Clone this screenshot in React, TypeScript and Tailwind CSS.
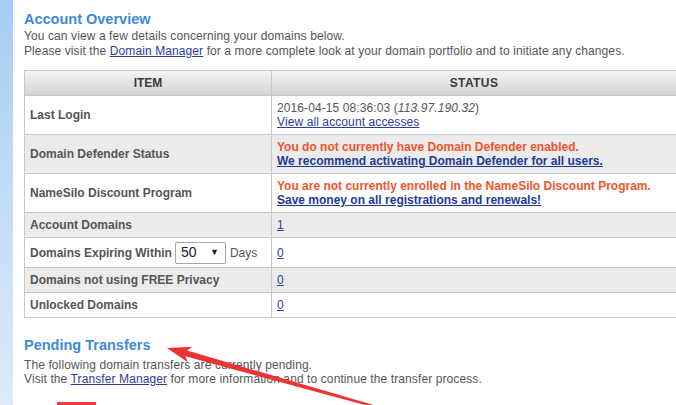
const rows = [
  { label: "Last Login", h: "h-[39px]", bg: "bg-white", kind: "login" },
  { label: "Domain Defender Status", h: "h-[39px]", bg: "bg-[#ebebeb]", kind: "defender" },
  { label: "NameSilo Discount Program", h: "h-[39px]", bg: "bg-white", kind: "discount" },
  { label: "Account Domains", h: "h-[25px]", bg: "bg-[#ebebeb]", kind: "1" },
  { label: "Domains Expiring Within", h: "h-[30px]", bg: "bg-white", kind: "expiring" },
  { label: "Domains not using FREE Privacy", h: "h-[25px]", bg: "bg-[#ebebeb]", kind: "0" },
  { label: "Unlocked Domains", h: "h-[25px]", bg: "bg-white", kind: "0" },
];

const linkCls = "text-[#2b3c9e] underline decoration-[#2b3c9e]";

function StatusCell({ kind }: { kind: string }) {
  if (kind === "login") {
    return (
      <div className="leading-[14px] tracking-[0.1px]">
        <div>
          2016-04-15 08:36:03 (<span className="italic">113.97.190.32</span>)
        </div>
        <a className={linkCls}>View all account accesses</a>
      </div>
    );
  }
  if (kind === "defender") {
    return (
      <div className="leading-[14px] font-bold">
        <div className="text-[#f2542a]">You do not currently have Domain Defender enabled.</div>
        <a className="text-[#1f3a96] underline">We recommend activating Domain Defender for all users.</a>
      </div>
    );
  }
  if (kind === "discount") {
    return (
      <div className="leading-[14px] font-bold">
        <div className="text-[#f2542a]">You are not currently enrolled in the NameSilo Discount Program.</div>
        <a className="text-[#1f3a96] underline">Save money on all registrations and renewals!</a>
      </div>
    );
  }
  return <a className={linkCls}>{kind === "expiring" ? "0" : kind}</a>;
}

export default function App() {
  return (
    <div className="relative flex h-[405px] overflow-hidden bg-white font-['Liberation_Sans',Arial,sans-serif] text-[12px] text-[#555]">
      <div className="w-[13px] shrink-0 bg-gradient-to-b from-[#a8cdf3] to-[#dcebfa]" />
      <main className="flex-1 pl-[11px] pt-[10px]">
        <h2 className="text-[14.5px] font-bold leading-[18px] text-[#3d8ad6]">Account Overview</h2>
        <p className="mt-px leading-[15px] tracking-[0.1px]">
          You can view a few details concerning your domains below.
          <br />
          Please visit the <a className={linkCls}>Domain Manager</a> for a more complete look at your domain
          portfolio and to initiate any changes.
        </p>

        <div className="mt-[11px] grid w-[653px] grid-cols-[247px_1fr] border-l border-t border-[#c8c8c8]">
          <div className="flex h-[25px] items-center justify-center border-b border-r border-[#c8c8c8] bg-gradient-to-b from-[#f4f4f4] to-[#d3d3d3] font-bold text-[#3a3a3a]">
            ITEM
          </div>
          <div className="flex h-[25px] items-center justify-center border-b border-r border-[#c8c8c8] bg-gradient-to-b from-[#f4f4f4] to-[#d3d3d3] font-bold tracking-[0.4px] text-[#3a3a3a]">
            STATUS
          </div>
          {rows.map((r) => (
            <div key={r.label} className="contents">
              <div className={`flex items-center border-b border-r border-[#c8c8c8] pl-[5px] font-bold ${r.h} ${r.bg}`}>
                {r.label}
                {r.kind === "expiring" && (
                  <>
                    <span className="ml-[3px] mr-[4px] flex h-[22px] w-[51px] items-center justify-between rounded-[2px] border border-[#a6a6a6] bg-white pl-[5px] pr-[6px] text-[14px] font-normal text-[#222]">
                      50<span className="text-[9px]">▼</span>
                    </span>
                    <span className="font-normal">Days</span>
                  </>
                )}
              </div>
              <div className={`flex items-center border-b border-r border-[#c8c8c8] pl-[5px] ${r.h} ${r.bg}`}>
                <StatusCell kind={r.kind} />
              </div>
            </div>
          ))}
        </div>

        <h2 className="mt-[18px] text-[14.5px] font-bold leading-[18px] text-[#3d8ad6]">Pending Transfers</h2>
        <p className="mt-[4px] leading-[14px] tracking-[0.1px]">
          The following domain transfers are currently pending.
          <br />
          Visit the <a className={linkCls}>Transfer Manager</a> for more information and to continue the transfer
          process.
        </p>

        <div className="mt-[16px] flex items-start">
          <div className="ml-[33px] h-[12px] w-[39px] bg-[#ee3b3b]" />
          <div className="ml-[304px] mt-[1px] whitespace-nowrap leading-[14px] text-[#ee3b3b]">
            to finalize, fill in the details below and submit it
          </div>
        </div>
      </main>

      <svg
        className="pointer-events-none absolute left-0 top-0"
        width="676"
        height="405"
        viewBox="0 0 676 405"
      >
        <polygon
          points="167,348 192.3,346.8 187.1,350.5 380.3,407 379.7,409 185.4,356.3 187.9,362.2"
          fill="#ee3333"
        />
      </svg>
    </div>
  );
}
